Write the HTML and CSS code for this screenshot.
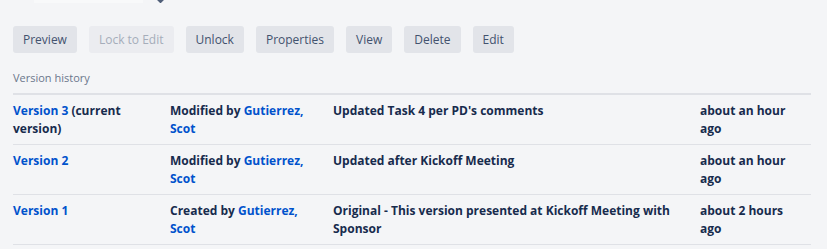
FILE: index.html
```html
<!DOCTYPE html>
<html lang="en">
<head>
    <title>Version history</title>
    <link rel="stylesheet" href="styles.css">
</head>
<body>

<div class="doc-head">
    <span class="doc-name"><a href="#0">Test_Doc_v3</a></span>
    <span class="doc-icon"></span>
</div>

<div class="doc-actions">
    <button class="btn">Preview</button>
    <button class="btn" disabled>Lock to Edit</button>
    <button class="btn">Unlock</button>
    <button class="btn">Properties</button>
    <button class="btn">View</button>
    <button class="btn">Delete</button>
    <button class="btn">Edit</button>
</div>

<div class="history">
    <div class="history-title">Version history</div>
    <table class="history-table">
        <colgroup>
            <col class="c-version" />
            <col class="c-author" />
            <col class="c-comment" />
            <col class="c-time" />
        </colgroup>
        <tr>
            <td><a href="#0">Version 3</a> (current version)</td>
            <td>Modified by <a href="#0">Gutierrez, Scot</a></td>
            <td>Updated Task 4 per PD's comments</td>
            <td>about an hour ago</td>
        </tr>
        <tr>
            <td><a href="#0">Version 2</a></td>
            <td>Modified by <a href="#0">Gutierrez, Scot</a></td>
            <td>Updated after Kickoff Meeting</td>
            <td>about an hour ago</td>
        </tr>
        <tr>
            <td><a href="#0">Version 1</a></td>
            <td>Created by <a href="#0">Gutierrez, Scot</a></td>
            <td>Original - This version presented at Kickoff Meeting with Sponsor</td>
            <td>about 2 hours ago</td>
        </tr>
    </table>
</div>

</body>
</html>
```

FILE: styles.css
```css
body {
    margin:0;
    background:#f4f5f7;
    color:#172b4d;
    font:normal 12px "Open Sans",Arial,sans-serif;
    overflow:hidden;
}

a {
    color:#0052cc;
    text-decoration:none;
}

/* clipped header above the buttons */
.doc-head {
    display:flex;
    align-items:flex-end;
    gap:14px;
    height:20px;
    margin:-17px 0 0 34px;
    overflow:hidden;
}

.doc-name {
    display:block;
    width:109px;
    height:20px;
    background:#f8f9fa;
    line-height:18px;
    padding:1px 0 0 4px;
    box-sizing:border-box;
}

.doc-icon {
    display:block;
    width:7px;
    height:7px;
    background:#505f79;
    transform:rotate(45deg);
    margin-bottom:1px;
}

.doc-actions {
    display:flex;
    gap:12px;
    padding:23px 13px 0 13px;
}

.btn {
    font:normal 12px "Open Sans",Arial,sans-serif;
    color:#42526e;
    background:#e2e4e9;
    border:0;
    border-radius:3px;
    height:27px;
    padding:0 10px;
}

.btn:disabled {
    background:#ebecf0;
    color:#a5adba;
}

.history {
    padding:0 16px 0 13px;
}

.history-title {
    font-size:11px;
    color:#6b778c;
    margin:17px 0 8px 0;
}

.history-table {
    width:798px;
    table-layout:fixed;
    border-collapse:collapse;
    border-top:2px solid #dfe1e6;
    font-weight:bold;
}

.history-table td {
    vertical-align:top;
    padding:7px 12px 6px 0;
    line-height:18px;
    border-bottom:1px solid #dfe1e6;
}

.c-version { width:157px; }
.c-author  { width:163px; }
.c-comment { width:367px; }
.c-time    { width:111px; }
```
